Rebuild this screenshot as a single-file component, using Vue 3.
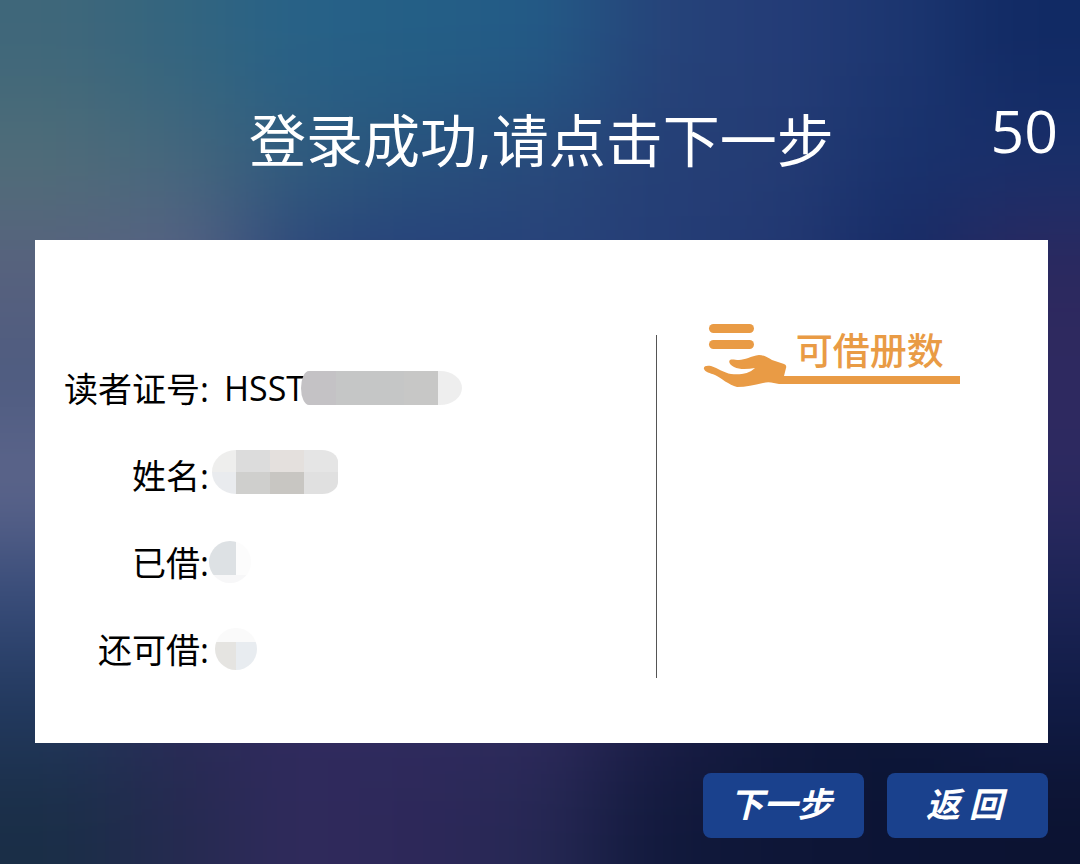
<script setup>
import { ref } from 'vue'

const seconds = ref(50)
const rows = [
  { label: '读者证号:', value: 'HSST', mask: 'card' },
  { label: '姓名:', value: '', mask: 'name' },
  { label: '已借:', value: '', mask: 'borrowed' },
  { label: '还可借:', value: '', mask: 'remaining' },
]

// Colour field of the backdrop, 9 columns by 8 rows, smoothed by the blur filter.
const field = [
  ['#3f677a', '#33657f', '#276187', '#245f86', '#235a86', '#264379', '#243c77', '#1c3670', '#112a64'],
  ['#506d78', '#45677c', '#305b7d', '#28517c', '#28497a', '#253f76', '#243c74', '#19326d', '#192f6a'],
  ['#58617e', '#5a6184', '#2c457a', '#263f7a', '#28427a', '#253d76', '#223772', '#162a65', '#2c285e'],
  ['#4d5b80', '#506084', '#283f75', '#263d75', '#263d75', '#253b72', '#20336c', '#182a64', '#2f2960'],
  ['#5e668c', '#50608a', '#283c70', '#263a70', '#263a70', '#25366c', '#1c2d62', '#1a2860', '#2c2960'],
  ['#384c7a', '#2f4270', '#2b3868', '#2a3566', '#2a3264', '#222c5c', '#162450', '#142250', '#1c2456'],
  ['#22395f', '#2a2b58', '#302a5e', '#2f2b5f', '#302b5e', '#1e1f4a', '#10183c', '#0c1638', '#101b45'],
  ['#1a2e47', '#252a50', '#302a5c', '#2d2859', '#262854', '#11193c', '#0e1637', '#0c1435', '#0c1332'],
]
const clamp = (n, max) => Math.min(Math.max(n, 0), max)
const cells = []
for (let r = -2; r <= 9; r++) {
  for (let c = -2; c <= 10; c++) {
    cells.push({ x: c * 120, y: r * 108, fill: field[clamp(r, 7)][clamp(c, 8)] })
  }
}
</script>

<template>
  <main class="page">
    <svg class="backdrop" viewBox="0 0 1080 864" preserveAspectRatio="none" aria-hidden="true">
      <defs>
        <filter id="soften" filterUnits="userSpaceOnUse" x="-240" y="-216" width="1560" height="1296" color-interpolation-filters="sRGB">
          <feGaussianBlur stdDeviation="48" />
        </filter>
      </defs>
      <g filter="url(#soften)">
        <rect v-for="(cell, i) in cells" :key="i" :x="cell.x" :y="cell.y" width="121" height="109" :fill="cell.fill" />
      </g>
    </svg>

    <header class="top">
      <h1 class="title">登录成功,请点击下一步</h1>
      <span class="timer">{{ seconds }}</span>
    </header>

    <section class="panel">
      <dl class="reader">
        <div v-for="row in rows" :key="row.label" class="row">
          <dt>{{ row.label }}</dt>
          <dd>
            <span v-if="row.value" class="value">{{ row.value }}</span>
            <span class="mask" :class="row.mask"></span>
          </dd>
        </div>
      </dl>
      <div class="quota">
        <h2 class="quota-title">
          <svg class="hand" viewBox="0 0 87 66" aria-hidden="true">
            <rect x="6" y="1" width="45" height="9" rx="4.5" />
            <rect x="6" y="17" width="45" height="9" rx="4.5" />
            <path d="M1 46C0 43 4 42 8 43C15 45 21 50 28 51C37 52 46 51 52 45C45 46 37 47 31 44C27 42 25 39 27 37C29 36 32 37 36 37C42 37 48 33 56 32C61 32 65 35 69 37L81 41Q84 42 83 45L81 53H87V61H76C71 60 66 58 60 60C51 62 43 64 34 64C26 62 18 55 12 52C7 50 2 49 1 46Z" />
          </svg>
          <span class="quota-text">可借册数</span>
        </h2>
      </div>
    </section>

    <footer class="actions">
      <button type="button">下一步</button>
      <button type="button">返 回</button>
    </footer>
  </main>
</template>

<style>
body {
  margin: 0;
}
</style>

<style scoped>
.page {
  position: relative;
  isolation: isolate;
  box-sizing: border-box;
  min-height: 100vh;
  padding: 0 32px 26px 35px;
  display: flex;
  flex-direction: column;
  font-family: "Open Sans", "Noto Sans CJK SC", sans-serif;
  background: #1c2e65;
}

.backdrop {
  position: absolute;
  inset: 0;
  z-index: -1;
  width: 100%;
  height: 100%;
}

.top {
  height: 240px;
  display: grid;
  grid-template-columns: 1fr auto 1fr;
  color: #fff;
}

.title {
  grid-column: 2;
  margin: 0;
  padding-top: 98px;
  font-size: 57px;
  line-height: 84px;
  font-weight: 400;
  white-space: nowrap;
}

.timer {
  justify-self: end;
  margin-right: -10px;
  padding-top: 88px;
  font-size: 59px;
  line-height: 84px;
}

.panel {
  flex: 1;
  display: grid;
  grid-template-columns: 19fr 12fr;
  background: #fff;
}

.reader {
  margin: 0;
  padding: 104px 0 51px 24px;
  color: #000;
  font-size: 34px;
}

.row {
  display: grid;
  grid-template-columns: 150px 1fr;
  align-items: center;
  height: 87px;
}

dt {
  text-align: right;
  white-space: nowrap;
}

dd {
  margin: 0;
  display: flex;
  align-items: center;
}

.value {
  margin-left: 15px;
}

.mask {
  flex: none;
}

.card {
  width: 161px;
  height: 34px;
  margin-left: -4px;
  border-radius: 8px 22px 22px 8px / 17px;
  background: linear-gradient(90deg, #c4c2c5 0 35px, #c5c6c6 35px 103px, #c7c7c6 103px 137px, #eee 137px);
}

.name {
  width: 126px;
  height: 44px;
  margin: 0 0 6px 3px;
  border-radius: 24px 16px 16px 24px / 22px 12px 12px 22px;
  background:
    linear-gradient(90deg, #eeeeed 0 24px, #dcdcdc 24px 58px, #e4e0dd 58px 92px, #e5e5e5 92px) top / 100% 22px no-repeat,
    linear-gradient(90deg, #e9ebee 0 24px, #cfcfcd 24px 58px, #c8c6c2 58px 92px, #e0e0e0 92px) bottom / 100% 22px no-repeat;
}

.borrowed {
  width: 42px;
  height: 42px;
  border-radius: 50%;
  background:
    linear-gradient(90deg, #dde1e4 0 27px, #fcfcfc 27px) top / 100% 34px no-repeat,
    #f7f7f8;
}

.remaining {
  width: 42px;
  height: 42px;
  margin-left: 6px;
  border-radius: 50%;
  background:
    linear-gradient(90deg, #e5e4e1 0 21px, #e8ecf0 21px) bottom / 100% 28px no-repeat,
    #fafafa;
}

.quota {
  margin: 95px 0 65px;
  padding-right: 88px;
  padding-left: 46px;
  border-left: 1px solid #555;
}

.quota-title {
  display: flex;
  height: 61px;
  margin: -12px 0 0;
  color: #e99b45;
}

.hand {
  flex: none;
  width: 87px;
  height: 66px;
  fill: #e99b45;
}

.quota-text {
  flex: 1;
  box-sizing: border-box;
  height: 61px;
  padding-left: 6px;
  border-bottom: 8px solid #e99b45;
  font-size: 37px;
  line-height: 56px;
  font-weight: 500;
  white-space: nowrap;
}

.actions {
  display: flex;
  justify-content: flex-end;
  gap: 23px;
  padding-top: 30px;
}

button {
  width: 161px;
  height: 65px;
  margin: 0;
  padding: 0 6px 6px 0;
  border: 0;
  border-radius: 8px;
  background: #1a418d;
  color: #fff;
  font: italic 700 34px "Open Sans", "Noto Sans CJK SC", sans-serif;
  cursor: pointer;
}
</style>
